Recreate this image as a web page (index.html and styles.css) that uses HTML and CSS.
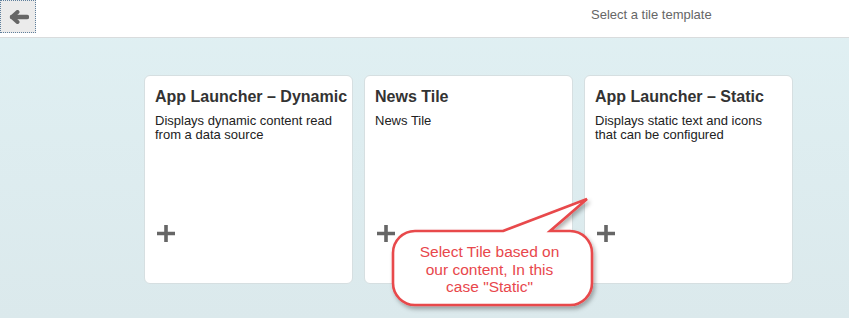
FILE: index.html
```html
<!DOCTYPE html>
<html lang="en">
<head>
    <meta charset="UTF-8">
    <meta name="viewport" content="width=device-width, initial-scale=1.0">
    <title>Select a tile template</title>
    <link rel="stylesheet" href="styles.css">
</head>
<body>
    <div class="page">
        <!-- header -->
        <div class="header">
            <button class="back-btn" type="button" aria-label="Back">
                <svg width="21" height="14" viewBox="0 0 21 14">
                    <path d="M4 7 H19" stroke="#666" stroke-width="4.5" stroke-linecap="round" fill="none"/>
                    <path d="M9.5 2 L4 7 L9.5 12" stroke="#666" stroke-width="4" stroke-linecap="round" stroke-linejoin="round" fill="none"/>
                </svg>
            </button>
            <div class="header-title">Select a tile template</div>
        </div>

        <!-- tiles -->
        <div class="tiles">
            <div class="tile">
                <div class="tile-title">App Launcher – Dynamic</div>
                <div class="tile-desc">Displays dynamic content read from a data source</div>
                <svg class="tile-add" width="18" height="17" viewBox="0 0 18 17">
                    <path d="M9 0 V17 M0 8.5 H18" stroke="#666" stroke-width="3.6" fill="none"/>
                </svg>
            </div>
            <div class="tile">
                <div class="tile-title">News Tile</div>
                <div class="tile-desc">News Tile</div>
                <svg class="tile-add" width="18" height="17" viewBox="0 0 18 17">
                    <path d="M9 0 V17 M0 8.5 H18" stroke="#666" stroke-width="3.6" fill="none"/>
                </svg>
            </div>
            <div class="tile">
                <div class="tile-title">App Launcher – Static</div>
                <div class="tile-desc">Displays static text and icons that can be configured</div>
                <svg class="tile-add" width="18" height="17" viewBox="0 0 18 17">
                    <path d="M9 0 V17 M0 8.5 H18" stroke="#666" stroke-width="3.6" fill="none"/>
                </svg>
            </div>
        </div>

        <!-- callout over the tiles -->
        <svg class="callout-shape" width="230" height="128" viewBox="0 0 230 128">
            <defs>
                <filter id="shadow" x="-10%" y="-10%" width="130%" height="140%">
                    <feDropShadow dx="2" dy="3" stdDeviation="2" flood-color="#000" flood-opacity="0.3"/>
                </filter>
            </defs>
            <path d="M123 41 L207 9 L170 41 H190 A22 22 0 0 1 212 63 V93 A22 22 0 0 1 190 115 H35 A22 22 0 0 1 13 93 V63 A22 22 0 0 1 35 41 Z"
                  fill="#fff" stroke="#e8484b" stroke-width="2.6" stroke-linejoin="miter" filter="url(#shadow)"/>
        </svg>
        <div class="callout-text">Select Tile based on our content, In this case "Static"</div>
    </div>
</body>
</html>
```

FILE: styles.css
```css
html, body {
    margin: 0;
    height: 100%;
}
body {
    font-family: "Liberation Sans", Arial, sans-serif;
    background: linear-gradient(#e0f0f3, #dbe9ec);
}
.page {
    position: relative;
    min-height: 100%;
}
.header {
    display: flex;
    align-items: flex-start;
    height: 37px;
    background: #fff;
    border-bottom: 1px solid #d9dcdd;
}
.back-btn {
    width: 36px;
    height: 33px;
    box-sizing: border-box;
    margin: 0;
    padding: 0;
    background: #ebebeb;
    border: 1px dotted #5f7f9c;
    display: flex;
    align-items: center;
    justify-content: center;
}
.header-title {
    margin-left: 555px;
    font-size: 13px;
    line-height: 29px;
    color: #666;
}
.tiles {
    display: flex;
    gap: 11px;
    padding: 37px 0 0 144px;
}
.tile {
    width: 209px;
    height: 209px;
    box-sizing: border-box;
    background: #fff;
    border: 1px solid #d6dfe1;
    border-radius: 6px;
    padding: 12px 10px 0;
    display: flex;
    flex-direction: column;
}
.tile-title {
    font-size: 16px;
    font-weight: bold;
    line-height: 18px;
    color: #333;
    white-space: nowrap;
}
.tile-desc {
    margin-top: 8px;
    font-size: 13px;
    line-height: 14px;
    color: #222;
}
.tile-add {
    margin: auto 0 41px 2px;
}
.callout-shape {
    position: absolute;
    left: 380px;
    top: 190px;
}
.callout-text {
    position: absolute;
    left: 412px;
    top: 243px;
    width: 155px;
    text-align: center;
    font-size: 15.5px;
    line-height: 17.5px;
    color: #e8474c;
}
```
